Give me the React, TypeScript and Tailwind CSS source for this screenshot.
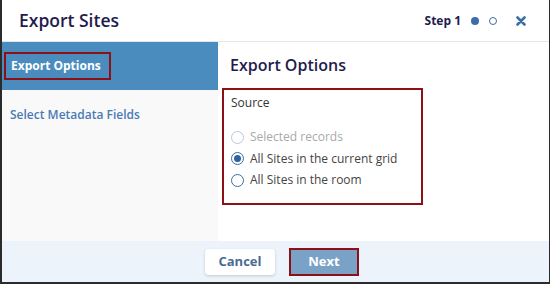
import { useState } from 'react'

const SOURCES = [
  { id: 'selected', label: 'Selected records', disabled: true },
  { id: 'grid', label: 'All Sites in the current grid', disabled: false },
  { id: 'room', label: 'All Sites in the room', disabled: false },
]

function Radio({ checked, disabled }: { checked: boolean; disabled: boolean }) {
  return (
    <span
      className={`flex h-[13px] w-[13px] items-center justify-center rounded-full border ${
        disabled ? 'border-[#b9c8da]' : 'border-[#3f6d9e]'
      } bg-white`}
    >
      {checked && <span className="h-[7px] w-[7px] rounded-full bg-[#2f62a0]" />}
    </span>
  )
}

export default function App() {
  const [source, setSource] = useState('grid')

  return (
    <div
      className="flex h-[284px] w-[550px] flex-col border-b-2 border-l-2 border-r border-[#2b2b2b] bg-white"
      style={{ fontFamily: '"Open Sans", "Noto Sans", sans-serif' }}
    >
      {/* Header */}
      <div className="flex h-[42px] shrink-0 items-center justify-between border-b border-[#e3e6ea] pl-[17px] pr-[23px]">
        <h1 className="text-[17.5px] font-semibold leading-none text-[#1f1c4d]">Export Sites</h1>
        <div className="flex items-center">
          <span className="text-[12px] font-bold text-[#1f1c4d]">Step 1</span>
          <span className="ml-[10px] h-[8px] w-[8px] rounded-full bg-[#3a6ea8]" />
          <span className="ml-[10px] h-[8px] w-[8px] rounded-full border border-[#3a6ea8] bg-white" />
          <svg className="ml-[19px]" width="10" height="10" viewBox="0 0 10 10">
            <path d="M1.5 1.5 L8.5 8.5 M8.5 1.5 L1.5 8.5" stroke="#3a6ea8" strokeWidth="2.6" strokeLinecap="round" />
          </svg>
        </div>
      </div>

      {/* Body */}
      <div className="flex min-h-0 flex-1">
        <aside className="flex w-[216px] shrink-0 flex-col bg-[#f9f9fa]">
          <div className="flex h-[48px] items-center bg-[#4a8cbd] pl-[2px]">
            <span className="border-2 border-[#8b1117] py-[3px] pl-[5px] pr-[8px] text-[12px] font-bold text-white">
              Export Options
            </span>
          </div>
          <div className="pl-[8px] pt-[16px] text-[12px] font-semibold text-[#4a7ab4]">Select Metadata Fields</div>
        </aside>

        <main className="flex-1 pl-[4px] pt-[11px]">
          <h2 className="pl-[8px] text-[16px] font-semibold text-[#1f1c4d]">Export Options</h2>
          <div className="mt-[11px] w-[201px] border-2 border-[#8b1117] pb-[13px] pl-[7px] pt-[4px]">
            <div className="text-[12px] text-[#333]">Source</div>
            <div className="mt-[16px] flex flex-col gap-[3px]">
              {SOURCES.map((s) => (
                <label
                  key={s.id}
                  className="flex items-center gap-[6px] text-[12px] leading-[18.5px]"
                  onClick={() => !s.disabled && setSource(s.id)}
                >
                  <Radio checked={source === s.id} disabled={s.disabled} />
                  <span className={s.disabled ? 'text-[#a9a9a9]' : 'text-[#444]'}>{s.label}</span>
                </label>
              ))}
            </div>
          </div>
        </main>
      </div>

      {/* Footer */}
      <div className="flex h-[41px] shrink-0 items-center justify-center gap-[14px] bg-[#edf3fa] pl-[13px]">
        <button className="h-[26px] w-[70px] rounded-[4px] bg-white text-[13px] font-bold text-[#4a6b94] shadow-[0_1px_3px_rgba(0,0,0,0.18)]">
          Cancel
        </button>
        <button className="h-[28px] w-[70px] border-2 border-[#8b1117] bg-[#7aa1c6] text-[13px] font-bold text-white">
          Next
        </button>
      </div>
    </div>
  )
}
